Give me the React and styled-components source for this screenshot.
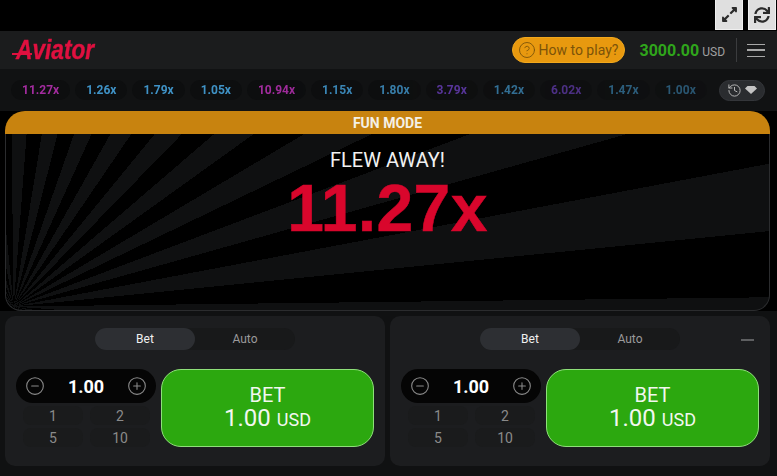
// App.jsx
import React from 'react';
import styled, { createGlobalStyle } from 'styled-components';
import { FaExpandAlt, FaSync } from 'react-icons/fa';
import { CircleHelp, CircleMinus, CirclePlus, History } from 'lucide-react';

const GlobalStyle = createGlobalStyle`
  html, body { margin: 0; padding: 0; background: #000; }
  body { font-family: Roboto, "Liberation Sans", sans-serif; }
  * { box-sizing: border-box; }
`;

const Page = styled.div`
  width: 777px;
  height: 476px;
  display: flex;
  flex-direction: column;
  overflow: hidden;
  background: #000;
`;

const TopBar = styled.div`
  height: 31px;
  flex: none;
  display: flex;
  justify-content: flex-end;
  gap: 5px;
  padding-right: 1px;
`;

const TopButton = styled.button`
  width: 28px;
  height: 30px;
  padding: 0;
  display: flex;
  align-items: center;
  justify-content: center;
  background: #dfdfdf;
  border: 1px solid #efefef;
  border-top: 0;
  color: #2b2b2b;
  font-size: ${p => p.$size}px;
`;

const Header = styled.header`
  height: 38px;
  flex: none;
  display: flex;
  align-items: center;
  padding: 0 12px;
  background: #1b1c1d;
`;

const Logo = styled.div`
  position: relative;
  width: 81px;
  padding-left: 4px;
  font: italic 700 27px/1 "Liberation Sans", sans-serif;
  color: #e0103f;
  -webkit-text-stroke: 0.4px #e0103f;
  white-space: nowrap;

  span {
    display: inline-block;
    transform: scaleX(0.84);
    transform-origin: left center;
  }

  /* the bar of the A runs out to the left */
  &::before {
    content: '';
    position: absolute;
    left: 0;
    top: 16px;
    width: 20px;
    height: 2px;
    background: #e0103f;
  }
`;

const HowTo = styled.div`
  margin-left: auto;
  width: 113px;
  height: 26px;
  display: flex;
  align-items: center;
  gap: 3px;
  padding-left: 5px;
  border-radius: 13px;
  background: #e8990f;
  color: #7c5309;
  font-size: 14px;
  border: 1px solid #f2a81c;
`;

const Balance = styled.div`
  margin-left: 15px;
  display: flex;
  align-items: baseline;
  gap: 3px;
  color: #2fa51b;
  font-size: 16px;
  font-weight: 700;
`;

const Currency = styled.span`
  color: #a0a0a0;
  font-size: 12px;
  font-weight: 400;
`;

const Divider = styled.div`
  width: 1px;
  height: 24px;
  margin: 0 10px 0 11px;
  background: #3b3c3e;
`;

const Burger = styled.div`
  width: 18px;
  height: 13px;
  border-top: 1.5px solid #a8a8a8;
  border-bottom: 1.5px solid #a8a8a8;
  display: flex;
  align-items: center;

  &::before {
    content: '';
    width: 100%;
    height: 1.5px;
    background: #a8a8a8;
  }
`;

const HistoryRow = styled.div`
  height: 42px;
  flex: none;
  display: flex;
  align-items: center;
  padding: 0 12px;
  background: #111213;
`;

const Chips = styled.div`
  display: flex;
  gap: 5px;
  margin-left: -1px;
  -webkit-mask-image: linear-gradient(90deg, #000 35%, rgba(0, 0, 0, 0.5) 100%);
  mask-image: linear-gradient(90deg, #000 35%, rgba(0, 0, 0, 0.5) 100%);
`;

const Chip = styled.div`
  padding: 3px 11px;
  border-radius: 10px;
  background: #0d0e0f;
  font-size: 12px;
  font-weight: 700;
  line-height: 14px;
  color: ${p => (p.$high ? '#a32c9f' : p.$mid ? '#6c3fc0' : '#3f92c6')};
`;

const HistoryButton = styled.div`
  margin-left: auto;
  width: 46px;
  height: 21px;
  display: flex;
  align-items: center;
  justify-content: center;
  gap: 3px;
  border-radius: 11px;
  background: #2a2c2f;
  border: 1px solid #34363a;
  color: #b5b5b5;
`;

const Game = styled.section`
  height: 200px;
  flex: none;
  margin: 0 7px 0 5px;
  display: flex;
  flex-direction: column;
`;

const ModeBar = styled.div`
  height: 23px;
  flex: none;
  display: flex;
  align-items: center;
  justify-content: center;
  background: #c8830f;
  border-radius: 20px 20px 0 0;
  color: #f4f0e6;
  font-size: 14px;
  font-weight: 700;
`;

const Stage = styled.div`
  flex: 1;
  display: flex;
  flex-direction: column;
  align-items: center;
  padding-top: 15px;
  border: 1px solid #2b2c2e;
  border-top: 0;
  border-radius: 0 0 16px 16px;
  background: repeating-conic-gradient(from 79.3deg at 1% 98%, #0f1011 0 5deg, #000 5deg 10deg);
`;

const Flew = styled.div`
  color: #f2f2f2;
  font-size: 20px;
  line-height: 22px;
`;

const Multiplier = styled.div`
  margin-top: 4px;
  color: #d9062c;
  font: 700 66px/66px "Liberation Sans", sans-serif;
  letter-spacing: 0.4px;
  -webkit-text-stroke: 0.5px #d9062c;
`;

const Panels = styled.div`
  display: grid;
  grid-template-columns: 380px 380px;
  gap: 5px;
  padding: 5px 0 0 5px;
  background: #101112;
  flex: 1;
`;

const Panel = styled.div`
  position: relative;
  height: 150px;
  padding: 12px 11px 0;
  border-radius: 10px;
  background: #1c1d1f;
`;

const Tabs = styled.div`
  width: 200px;
  height: 22px;
  margin: 0 0 19px 79px;
  display: grid;
  grid-template-columns: 1fr 1fr;
  border-radius: 11px;
  background: #18191a;
`;

const Tab = styled.div`
  display: flex;
  align-items: center;
  justify-content: center;
  border-radius: 11px;
  font-size: 12px;
  color: ${p => (p.$active ? '#f0f0f0' : '#9a9a9a')};
  background: ${p => (p.$active ? '#2d2f33' : 'transparent')};
`;

const Collapse = styled.div`
  position: absolute;
  top: 23px;
  right: 16px;
  width: 13px;
  height: 1.5px;
  background: #5e5f61;
`;

const Controls = styled.div`
  display: flex;
  gap: 5px;
`;

const Amounts = styled.div`
  width: 140px;
  display: flex;
  flex-direction: column;
`;

const Stepper = styled.div`
  height: 34px;
  display: flex;
  align-items: center;
  justify-content: space-between;
  padding: 0 9px;
  border-radius: 17px;
  background: #050505;
  color: #8b8b8b;
`;

const StepValue = styled.div`
  color: #fff;
  font-size: 18px;
  font-weight: 700;
`;

const Quick = styled.div`
  margin: 3px 6px 0 7px;
  display: grid;
  grid-template-columns: 60px 60px;
  grid-auto-rows: 19px;
  gap: 3px 7px;
`;

const QuickButton = styled.div`
  display: flex;
  align-items: center;
  justify-content: center;
  border-radius: 8px;
  background: #1a1b1c;
  color: #8a8a8a;
  font-size: 14px;
`;

const BetButton = styled.button`
  width: 213px;
  height: 78px;
  padding: 1px 0 0;
  display: flex;
  flex-direction: column;
  align-items: center;
  justify-content: center;
  border-radius: 20px;
  border: 1px solid #8fe07a;
  background: #2ca80f;
  color: #f2f7ef;
  font-family: Roboto, sans-serif;
  font-size: 20px;
  line-height: 20px;
`;

const BetAmount = styled.div`
  font-size: 24px;
  line-height: 26px;
`;

const BetCurrency = styled.span`
  font-size: 18px;
`;

const multipliers = [
  { v: '11.27x', high: true },
  { v: '1.26x' },
  { v: '1.79x' },
  { v: '1.05x' },
  { v: '10.94x', high: true },
  { v: '1.15x' },
  { v: '1.80x' },
  { v: '3.79x', mid: true },
  { v: '1.42x' },
  { v: '6.02x', mid: true },
  { v: '1.47x' },
  { v: '1.00x' },
];

const BetPanel = ({ collapsible }) => (
  <Panel>
    <Tabs>
      <Tab $active>Bet</Tab>
      <Tab>Auto</Tab>
    </Tabs>
    {collapsible && <Collapse />}
    <Controls>
      <Amounts>
        <Stepper>
          <CircleMinus size={20} strokeWidth={1.3} />
          <StepValue>1.00</StepValue>
          <CirclePlus size={20} strokeWidth={1.3} />
        </Stepper>
        <Quick>
          {[1, 2, 5, 10].map(n => <QuickButton key={n}>{n}</QuickButton>)}
        </Quick>
      </Amounts>
      <BetButton>
        BET
        <BetAmount>1.00 <BetCurrency>USD</BetCurrency></BetAmount>
      </BetButton>
    </Controls>
  </Panel>
);

const App = () => (
  <Page>
    <GlobalStyle />
    <TopBar>
      <TopButton $size={17}><FaExpandAlt /></TopButton>
      <TopButton $size={16}><FaSync /></TopButton>
    </TopBar>
    <Header>
      <Logo><span>Aviator</span></Logo>
      <HowTo><CircleHelp size={18} strokeWidth={1.2} />How to play?</HowTo>
      <Balance>3000.00 <Currency>USD</Currency></Balance>
      <Divider />
      <Burger />
    </Header>
    <HistoryRow>
      <Chips>
        {multipliers.map((m, i) => (
          <Chip key={i} $high={m.high} $mid={m.mid}>{m.v}</Chip>
        ))}
      </Chips>
      <HistoryButton>
        <History size={15} strokeWidth={1.6} />
        <svg width="12" height="8" viewBox="0 0 12 8">
          <path d="M2.5 0h7L12 2.5 6 8 0 2.5z" fill="#c4c4c4" />
        </svg>
      </HistoryButton>
    </HistoryRow>
    <Game>
      <ModeBar>FUN MODE</ModeBar>
      <Stage>
        <Flew>FLEW AWAY!</Flew>
        <Multiplier>11.27x</Multiplier>
      </Stage>
    </Game>
    <Panels>
      <BetPanel />
      <BetPanel collapsible />
    </Panels>
  </Page>
);

export default App;
